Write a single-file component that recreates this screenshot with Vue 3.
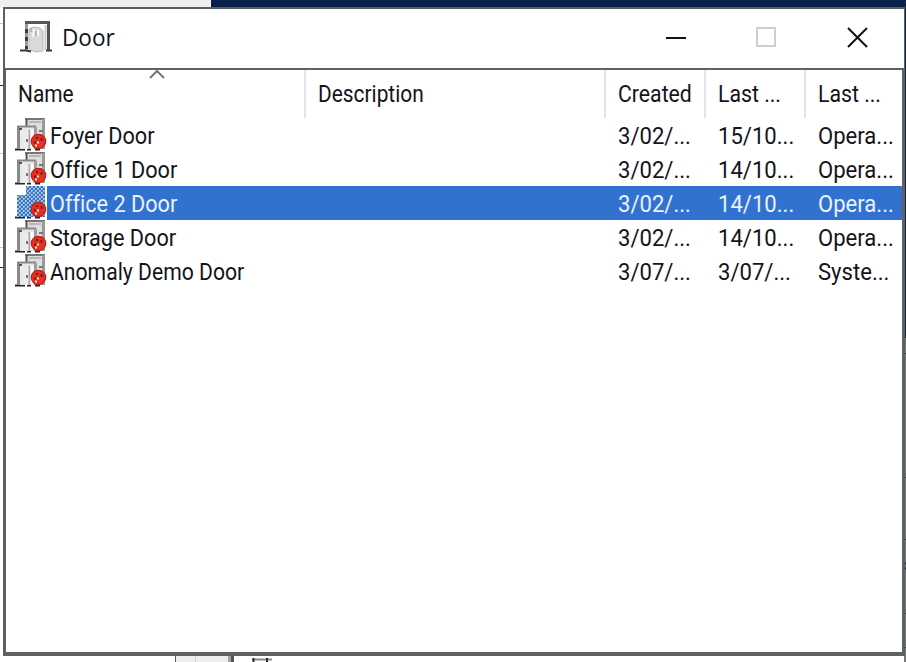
<script setup>
const columns = [
  { label: 'Name', cls: 'name', sorted: true },
  { label: 'Description', cls: 'desc' },
  { label: 'Created', cls: 'date' },
  { label: 'Last ...', cls: 'date' },
  { label: 'Last ...', cls: 'last' },
]
const rows = [
  { name: 'Foyer Door', created: '3/02/...', modified: '15/10...', by: 'Opera...' },
  { name: 'Office 1 Door', created: '3/02/...', modified: '14/10...', by: 'Opera...' },
  { name: 'Office 2 Door', created: '3/02/...', modified: '14/10...', by: 'Opera...', selected: true },
  { name: 'Storage Door', created: '3/02/...', modified: '14/10...', by: 'Opera...' },
  { name: 'Anomaly Demo Door', created: '3/07/...', modified: '3/07/...', by: 'Syste...', long: true },
]
</script>

<template>
  <div class="desktop">
    <svg class="backdrop" width="906" height="662" aria-hidden="true">
      <rect width="906" height="662" fill="#fff" />
      <rect width="211" height="8" fill="#efefef" />
      <rect x="211" width="695" height="8" fill="#08214b" />
      <rect x="904" width="2" height="338" fill="#102443" />
      <rect x="904" y="338" width="2" height="324" fill="#777a7b" />
      <path d="M0 23.5h3M0 153.5h3M0 247.5h3" stroke="#c6c6c6" />
      <path d="M0 85.5h3M0 267.5h3" stroke="#19264f" />
      <path d="M904 353.5h2M904 477.5h2M904 539.5h2M904 613.5h2M904 647.5h2" stroke="#463b50" />
      <path d="M904 563.5h2M904 568.5h2" stroke="#14235c" stroke-width="2" />
      <rect x="175" y="654" width="55" height="8" fill="#ededed" />
      <path d="M175.500 654v8" stroke="#555b68" />
      <path d="M195.500 656v6" stroke="#d2d2d2" />
      <path d="M229.500 654v8" stroke="#a2a2a2" stroke-width="3" />
      <path d="M232.500 654v8" stroke="#555" stroke-width="3" />
      <path d="M252 659.5h20" stroke="#8a8a8a" stroke-width="2" />
      <path d="M253.500 658v4M267 658v4" stroke="#292b32" stroke-width="2" />
    </svg>
    <main class="window">
      <header class="titlebar">
        <svg class="door" viewBox="0 0 34 34">
          <path d="M5 2h25v28H5z" fill="#fff" />
          <path d="M5 2.500h25" stroke="#575757" stroke-width="3" />
          <path d="M28.500 2v28" stroke="#4e5853" stroke-width="3" />
          <path d="M25.500 5v25" stroke="#c9cbc9" stroke-width="2" />
          <path d="M6.500 4v26" stroke="#999" stroke-width="3" />
          <path d="M6.500 9v4M6.500 17v4M6.500 26v3" stroke="#3c3c3c" stroke-width="3" />
          <path d="M9 9l4-2 7 1 3 3v20l-8 1-6-3z" fill="#d9d9d9" stroke="#b9b9b9" />
          <path d="M14 9l-1 8M18 10v6" stroke="#f8f8f8" stroke-width="2" />
          <path d="M16 11v5M11 8v4" stroke="#aaa" stroke-width="1.5" />
          <path d="M0 30.500h6l5 1M26 30.500h6" fill="none" stroke="#3a3a3a" stroke-width="2" />
        </svg>
        <h1>Door</h1>
        <div class="controls">
          <svg width="194" height="24" viewBox="0 0 194 24">
            <path d="M0 13h20" stroke="#111" stroke-width="2" />
            <rect x="91" y="3" width="18" height="18" fill="none" stroke="#cecece" stroke-width="2" />
            <path d="M182 3l19 19M201 3l-19 19" stroke="#111" stroke-width="2" />
          </svg>
        </div>
      </header>
      <section class="list">
        <div class="grid head">
          <div v-for="(c, i) in columns" :key="i" class="cell" :class="c.cls">
            <span>{{ c.label }}</span>
            <svg v-if="c.sorted" class="sort" viewBox="0 0 16 10">
              <path d="M1 9l7-7 7 7" fill="none" stroke="#777" stroke-width="2" />
            </svg>
          </div>
        </div>
        <div v-for="r in rows" :key="r.name" class="row" :class="{ selected: r.selected, long: r.long }">
          <svg class="item-icon" viewBox="0 0 32 34">
            <defs>
              <pattern id="dither" width="4" height="4" patternUnits="userSpaceOnUse">
                <rect width="4" height="4" fill="#3578c8" />
                <path d="M0 0h1.700v1.700H0zM2 2h1.700v1.700H2z" fill="#bdd5ea" />
              </pattern>
            </defs>
            <path d="M0 31.500h10M12 31.500h4M20 31.500h5" stroke="#262626" stroke-width="2" />
            <path v-if="r.selected" d="M11 0h19v31H2V9h9z" fill="url(#dither)" />
            <g v-else>
              <rect x="11" y="0" width="19" height="31" fill="#dedede" />
              <path d="M10 1h20" stroke="#777" stroke-width="2" />
              <path d="M11.500 1v7" stroke="#555" stroke-width="2" />
              <path d="M28.500 1v30" stroke="#999" stroke-width="3" />
              <path d="M14 4h12" stroke="#aaa" stroke-width="1.500" />
              <path d="M24 13h4" stroke="#777" stroke-width="2" />
              <path d="M2 9h19v22H2z" fill="#e6e6e6" />
              <path d="M2 8.500h19" stroke="#888" stroke-width="2" />
              <path d="M3.500 9v22" stroke="#8a8a8a" stroke-width="3" />
              <path d="M20.500 9v22" stroke="#a0a0a0" stroke-width="3" />
              <path d="M4 11h3" stroke="#555" stroke-width="2" />
              <path d="M6 12l8 1v18l-8-1z" fill="#ececec" />
              <path d="M14.500 12v19" stroke="#aaa" stroke-width="2" />
              <path d="M17 12v18" stroke="#fff" stroke-width="3" />
              <path d="M12 21v3" stroke="#777" stroke-width="2" />
            </g>
            <circle cx="23.500" cy="23.500" r="7.200" fill="#e73022" stroke="#b3221a" stroke-width="1.200" />
            <path d="M22 19v2M26.500 20v3M19 24.500h2" fill="none" stroke="#741612" stroke-width="1.800" />
            <path d="M22 24.500h2M20 27.500h2" stroke="#ffe3df" stroke-width="2" />
          </svg>
          <div class="grid values">
            <div class="cell name"><span>{{ r.name }}</span></div>
            <div class="cell desc"></div>
            <div class="cell date"><span>{{ r.created }}</span></div>
            <div class="cell date"><span>{{ r.modified }}</span></div>
            <div class="cell last"><span>{{ r.by }}</span></div>
          </div>
        </div>
      </section>
    </main>
  </div>
</template>

<style>
body { overflow: hidden; }
</style>
<style scoped>
* { box-sizing: border-box; }
.desktop { position: relative; width: 906px; height: 662px; padding: 7px 1px 6px 3px; font-family: Roboto, "Liberation Sans", sans-serif; color: #14141c; }
.backdrop { position: absolute; inset: 0; }
.window { position: relative; width: 902px; height: 649px; background: #fff; border: solid #5c5e5f; border-width: 2px 1px 1px 2px; display: flex; flex-direction: column; }
.titlebar { height: 59px; display: flex; align-items: center; padding-left: 15px; flex: none; }
.door { width: 34px; height: 34px; margin-top: -4px; }
h1 { font-family: "Open Sans", sans-serif; font-size: 24px; line-height: 30px; font-weight: 400; margin: -3px 0 0 8px; transform: scaleX(.94); transform-origin: left; }
.controls { margin-left: auto; margin-right: 44px; height: 24px; margin-top: -4px; }
.controls svg { display: block; overflow: visible; }
.list { flex: 1; border: solid #606262; border-width: 2px 2px 3px 1px; }
.grid { display: grid; grid-template-columns: 300px 300px 100px 100px 1fr; }
.head { height: 48px; }
.cell { display: flex; align-items: center; white-space: nowrap; font-size: 24px; line-height: 34px; padding-left: 12px; min-width: 0; font-variant-ligatures: none; }
.cell span { transform: scaleX(.92); transform-origin: left; }
.values .cell { height: 34px; padding-top: 2px; }
.head .cell span { transform: scaleX(.87); }
.head .date span, .head .last span { transform: scaleX(.885); }
.head .cell:last-child { border: 0; }
.head .cell { border-right: 2px solid #e5e5e5; position: relative; }
.head .cell.last { border: 0; }
.sort { position: absolute; left: 143px; top: -1px; width: 16px; height: 10px; }
.row { display: flex; height: 34px; padding-left: 9px; }
.item-icon { width: 32px; height: 34px; flex: none; }
.values { flex: 1; grid-template-columns: 259px 300px 100px 100px 1fr; }
.values .name { padding-left: 3px; }
.values .name span { transform: scaleX(.903); }
.long .name span { transform: scaleX(.882); }
.selected .values { background: #3172d1; color: #e9f2ff; }
</style>
